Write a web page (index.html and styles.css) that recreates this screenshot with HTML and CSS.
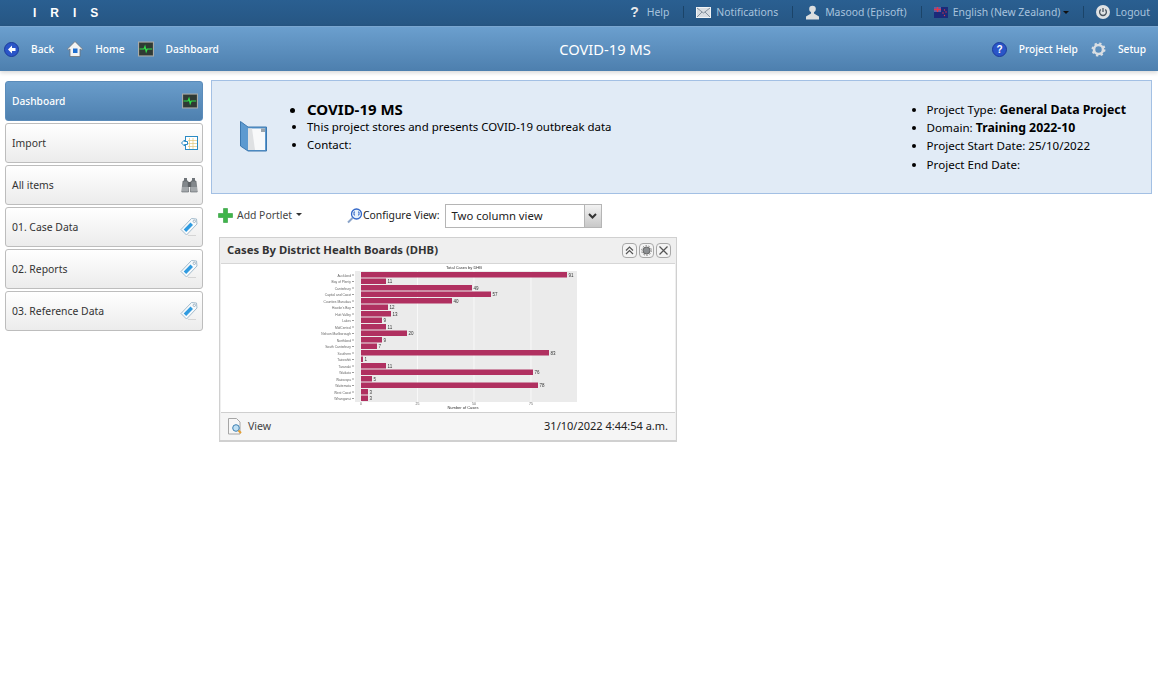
FILE: index.html
```html
<!DOCTYPE html>
<html lang="en">
<head>
    <meta charset="UTF-8">
    <meta name="viewport" content="width=device-width, initial-scale=1.0">
    <title>IRIS - COVID-19 MS</title>
    <link rel="stylesheet" href="styles.css">
</head>
<body>
    <svg class="defs" width="0" height="0" aria-hidden="true">
        <symbol id="icon-monitor" viewBox="0 0 16 16">
            <rect x="0.5" y="1" width="15" height="14" fill="#4a4f4b" stroke="#a9aba6"/>
            <rect x="1.500" y="2" width="13" height="12" fill="#2f3a34"/>
            <path d="M1.500 8h4.500l1-2.500 1.200 5 1-2.500h5" fill="none" stroke="#2fe04a" stroke-width="1.200"/>
        </symbol>
        <symbol id="icon-tag" viewBox="0 0 18 20">
            <path d="M11.500 1.500l5 .5.5 5-10.500 11-5.500-5.500z" fill="#f7fafc" stroke="#a4bccd"/>
            <path d="M10.500 5.500l2.500 2.500-6.800 7-2.500-2.500z" fill="#2f9be0"/>
            <circle cx="14.300" cy="4.300" r="1.200" fill="#fff" stroke="#7e98ac" stroke-width=".7"/>
            <path d="M8 18.500h8" stroke="#d5d5d5"/>
        </symbol>
    </svg>

    <header class="top-bar">
        <div class="brand">IRIS</div>
        <nav class="top-links">
            <a href="#help" class="top-link">
                <span class="glyph-help">?</span>
                Help
            </a>
            <a href="#notifications" class="top-link">
                <svg width="15" height="11" viewBox="0 0 15 11"><rect x=".5" y=".5" width="14" height="10" fill="#d8dde2" stroke="#f2f4f6"/><path d="M1 1l6.500 5L14 1M1 10l5-5M14 10L9 5" fill="none" stroke="#86929e"/></svg>
                Notifications
            </a>
            <a href="#user" class="top-link">
                <svg width="15" height="15" viewBox="0 0 15 15"><circle cx="7.500" cy="4" r="3.300" fill="#dcdedf"/><path d="M6 6.500h3v2l5 3v3H1v-3l5-3z" fill="#dcdedf"/></svg>
                Masood (Episoft)
            </a>
            <a href="#lang" class="top-link">
                <svg width="14" height="11" viewBox="0 0 14 11"><rect width="14" height="11" fill="#1b2a7a"/><rect width="7" height="5" fill="#5a5fa8"/><path d="M0 2.500h7M3.500 0v5" stroke="#e0364a" stroke-width="1.400"/><circle cx="10.500" cy="3" r=".7" fill="#e0364a"/><circle cx="12" cy="5" r=".7" fill="#e0364a"/><circle cx="9" cy="6" r=".7" fill="#e0364a"/><circle cx="10.500" cy="8.500" r=".7" fill="#e0364a"/></svg>
                English (New Zealand)
                <span class="caret caret-dark"></span>
            </a>
            <a href="#logout" class="top-link">
                <svg width="14" height="14" viewBox="0 0 14 14"><circle cx="7" cy="7" r="7" fill="#dfe2e4"/><path d="M4.700 4.600a3.400 3.400 0 1 0 4.600 0" fill="none" stroke="#4b5660" stroke-width="1.300"/><path d="M7 3v4" stroke="#4b5660" stroke-width="1.300"/></svg>
                Logout
            </a>
        </nav>
    </header>

    <div class="sub-bar">
        <div class="sub-links">
            <a href="#back" class="sub-link">
                <svg width="15" height="15" viewBox="0 0 15 15"><circle cx="7.500" cy="7.500" r="7" fill="#2a55c8" stroke="#1d3c9a"/><path d="M8 3.500L4 7.500l4 4V9h3.500V6H8z" fill="#fff"/></svg>
                Back
            </a>
            <a href="#home" class="sub-link">
                <svg width="16" height="16" viewBox="0 0 16 16"><path d="M8 .5L.5 8l1 1L3 8V15.500h10V8l1.500 1 1-1z" fill="#f3f4f4" stroke="#6f7276" stroke-width=".8"/><rect x="6" y="7.500" width="4.500" height="4.500" fill="#1f6fd0"/></svg>
                Home
            </a>
            <a href="#dashboard" class="sub-link">
                <svg width="16" height="16"><use href="#icon-monitor"/></svg>
                Dashboard
            </a>
        </div>
        <div class="sub-title">COVID-19 MS</div>
        <div class="sub-links sub-right">
            <a href="#project-help" class="sub-link">
                <svg width="15" height="15" viewBox="0 0 15 15"><circle cx="7.500" cy="7.500" r="7" fill="#2a55c8" stroke="#1d3c9a"/><text x="7.500" y="11" class="help-mark">?</text></svg>
                Project Help
            </a>
            <a href="#setup" class="sub-link">
                <svg width="15" height="15" viewBox="0 0 15 15"><circle cx="7.500" cy="7.500" r="4.500" fill="none" stroke="#d9dee3" stroke-width="2.600"/><circle cx="7.500" cy="7.500" r="6" fill="none" stroke="#d9dee3" stroke-width="2" stroke-dasharray="2.300 2.410"/></svg>
                Setup
            </a>
        </div>
    </div>

    <main class="content">
        <aside class="sidebar">
            <a href="#dashboard" class="side-item active">
                Dashboard
                <svg width="16" height="16"><use href="#icon-monitor"/></svg>
            </a>
            <a href="#import" class="side-item">
                Import
                <svg width="17" height="15" viewBox="0 0 17 15"><rect x="4.500" y=".5" width="12" height="13" fill="#fff" stroke="#2a8bc4"/><path d="M7 4.500h9M7 7.500h9M7 10.500h9M8.500 2v11M12 2v11" stroke="#e3c77a" stroke-width=".7"/><path d="M.5 7l3-3v1.500h3v3h-3V10z" fill="#fff" stroke="#2a8bc4"/></svg>
            </a>
            <a href="#all" class="side-item">
                All items
                <svg width="17" height="16" viewBox="0 0 17 16"><path d="M3 1h3v3H3zM11 1h3v3h-3z" fill="#70757a"/><path d="M2 4h5l.5 11H.8zM10 4h5l1.200 11H9.500z" fill="#83888c" stroke="#5d6165" stroke-width=".6"/><rect x="7" y="5" width="3" height="5" fill="#5d6165"/><rect x="1" y="10" width="6" height="4.500" fill="#a4a8ab"/><rect x="10" y="10" width="6" height="4.500" fill="#a4a8ab"/></svg>
            </a>
            <a href="#case-data" class="side-item">
                01. Case Data
                <svg width="18" height="20"><use href="#icon-tag"/></svg>
            </a>
            <a href="#reports" class="side-item">
                02. Reports
                <svg width="18" height="20"><use href="#icon-tag"/></svg>
            </a>
            <a href="#reference" class="side-item">
                03. Reference Data
                <svg width="18" height="20"><use href="#icon-tag"/></svg>
            </a>
        </aside>

        <section class="main-col">
            <div class="project-panel">
                <svg class="project-icon" width="27" height="32" viewBox="0 0 27 32">
                    <path d="M.5 .5L8 6h18.500v24H8L.5 25z" fill="#5d9ad0" stroke="#3c78b0"/>
                    <path d="M8 7.500h17V29H8z" fill="#f8f9fa"/>
                    <path d="M8 7.500h4l3 21.500H8z" fill="#dfe1e3"/>
                    <path d="M21 7.500h4V11h-4z" fill="#9aa4ad"/>
                </svg>
                <ul class="project-info">
                    <li class="project-name">COVID-19 MS</li>
                    <li>This project stores and presents COVID-19 outbreak data</li>
                    <li>Contact:</li>
                </ul>
                <ul class="project-meta">
                    <li>Project Type: <b>General Data Project</b></li>
                    <li>Domain: <b>Training 2022-10</b></li>
                    <li>Project Start Date: 25/10/2022</li>
                    <li>Project End Date:</li>
                </ul>
            </div>

            <div class="toolbar">
                <a href="#add" class="add-portlet">
                    <svg width="15" height="15" viewBox="0 0 15 15"><path d="M5.500 .5h4v5h5v4h-5v5h-4v-5h-5v-4h5z" fill="#3fb54a" stroke="#2f9a3c" stroke-width=".6"/></svg>
                    Add Portlet
                    <span class="caret"></span>
                </a>
                <div class="configure">
                    <svg width="16" height="16" viewBox="0 0 16 16"><circle cx="9.500" cy="6" r="5" fill="#e8f2fb" stroke="#3468c8" stroke-width="1.300"/><path d="M5.500 10L1 14.500" stroke="#8aa3c8" stroke-width="2"/><path d="M8 4H7v3h1M11 4h1v3h-1" fill="none" stroke="#3468c8"/></svg>
                    <label for="view-select">Configure View:</label>
                    <div class="select-box" id="view-select">
                        <span>Two column view</span>
                        <span class="select-btn"><svg width="9" height="6" viewBox="0 0 9 6"><path d="M1 1l3.500 3.500L8 1" fill="none" stroke="#333" stroke-width="2"/></svg></span>
                    </div>
                </div>
            </div>

            <div class="portlet">
                <div class="portlet-head">
                    <h2>Cases By District Health Boards (DHB)</h2>
                    <div class="portlet-tools">
                        <button class="tool-btn" type="button"><svg width="9" height="9" viewBox="0 0 9 9"><path d="M1 4.500l3.500-3.500L8 4.500M1 8l3.500-3.500L8 8" fill="none" stroke="#555" stroke-width="1.200"/></svg></button>
                        <button class="tool-btn" type="button"><svg width="11" height="11" viewBox="0 0 11 11"><circle cx="5.500" cy="5.500" r="3.500" fill="#8c8f92" stroke="#666"/><circle cx="5.500" cy="5.500" r="4.800" fill="none" stroke="#777" stroke-dasharray="1.500 1.500"/></svg></button>
                        <button class="tool-btn" type="button"><svg width="9" height="9" viewBox="0 0 9 9"><path d="M.5 .5l8 8M8.500 .5l-8 8" stroke="#555" stroke-width="1.200"/></svg></button>
                    </div>
                </div>
                <div class="portlet-body">
                    <svg class="chart" width="260" height="148" viewBox="0 0 260 148">
                        <text x="144" y="6" class="chart-title">Total Cases by DHB</text>
                        <rect x="35" y="8" width="222" height="131" class="plot"/>
                        <path class="grid" d="M41 8v131M97.500 8v131M154 8v131M211 8v131"/>
                        <path class="axis-ticks" d="M32 12h2M32 18.500h2M32 25h2M32 31.500h2M32 38h2M32 44.500h2M32 51h2M32 57.500h2M32 64h2M32 70.500h2M32 77h2M32 83.500h2M32 90h2M32 96.500h2M32 103h2M32 109.500h2M32 116h2M32 122.500h2M32 129h2M32 135.500h2"/>
                        <g class="chart-labels">
                            <text x="31" y="13.500">Auckland</text>
                            <text x="31" y="20">Bay of Plenty</text>
                            <text x="31" y="26.500">Canterbury</text>
                            <text x="31" y="33">Capital and Coast</text>
                            <text x="31" y="39.500">Counties Manukau</text>
                            <text x="31" y="46">Hawke's Bay</text>
                            <text x="31" y="52.500">Hutt Valley</text>
                            <text x="31" y="59">Lakes</text>
                            <text x="31" y="65.500">MidCentral</text>
                            <text x="31" y="72">Nelson Marlborough</text>
                            <text x="31" y="78.500">Northland</text>
                            <text x="31" y="85">South Canterbury</text>
                            <text x="31" y="91.500">Southern</text>
                            <text x="31" y="98">Tairawhiti</text>
                            <text x="31" y="104.500">Taranaki</text>
                            <text x="31" y="111">Waikato</text>
                            <text x="31" y="117.500">Wairarapa</text>
                            <text x="31" y="124">Waitemata</text>
                            <text x="31" y="130.500">West Coast</text>
                            <text x="31" y="137">Whanganui</text>
                        </g>
                        <g class="bars">
                            <rect x="41" y="9" width="206" height="5.500"/>
                            <rect x="41" y="15.500" width="25" height="5.500"/>
                            <rect x="41" y="22" width="111" height="5.500"/>
                            <rect x="41" y="28.500" width="130" height="5.500"/>
                            <rect x="41" y="35" width="91" height="5.500"/>
                            <rect x="41" y="41.500" width="27" height="5.500"/>
                            <rect x="41" y="48" width="30" height="5.500"/>
                            <rect x="41" y="54.500" width="21" height="5.500"/>
                            <rect x="41" y="61" width="25" height="5.500"/>
                            <rect x="41" y="67.500" width="46" height="5.500"/>
                            <rect x="41" y="74" width="21" height="5.500"/>
                            <rect x="41" y="80.500" width="16" height="5.500"/>
                            <rect x="41" y="87" width="188" height="5.500"/>
                            <rect x="41" y="93.500" width="2" height="5.500"/>
                            <rect x="41" y="100" width="25" height="5.500"/>
                            <rect x="41" y="106.500" width="172" height="5.500"/>
                            <rect x="41" y="113" width="11" height="5.500"/>
                            <rect x="41" y="119.500" width="177" height="5.500"/>
                            <rect x="41" y="126" width="7" height="5.500"/>
                            <rect x="41" y="132.500" width="7" height="5.500"/>
                        </g>
                        <g class="bar-values">
                            <text x="248.500" y="13.500">91</text>
                            <text x="67.500" y="20">11</text>
                            <text x="153.500" y="26.500">49</text>
                            <text x="172.500" y="33">57</text>
                            <text x="133.500" y="39.500">40</text>
                            <text x="69.500" y="46">12</text>
                            <text x="72.500" y="52.500">13</text>
                            <text x="63.500" y="59">9</text>
                            <text x="67.500" y="65.500">11</text>
                            <text x="88.500" y="72">20</text>
                            <text x="63.500" y="78.500">9</text>
                            <text x="58.500" y="85">7</text>
                            <text x="230.500" y="91.500">83</text>
                            <text x="44.500" y="98">1</text>
                            <text x="67.500" y="104.500">11</text>
                            <text x="214.500" y="111">76</text>
                            <text x="53.500" y="117.500">5</text>
                            <text x="219.500" y="124">78</text>
                            <text x="49.500" y="130.500">3</text>
                            <text x="49.500" y="137">3</text>
                        </g>
                        <g class="chart-ticks">
                            <text x="41" y="142">0</text>
                            <text x="97.500" y="142">25</text>
                            <text x="154" y="142">50</text>
                            <text x="211" y="142">75</text>
                        </g>
                        <text x="143" y="146" class="chart-title">Number of Cases</text>
                    </svg>
                </div>
                <div class="portlet-foot">
                    <a href="#view" class="view-link">
                        <svg width="17" height="17" viewBox="0 0 17 17"><path d="M1.500 .5h8l3.500 3.500v12H1.500z" fill="#f7f7f7" stroke="#a6a6a6"/><circle cx="9" cy="10" r="3.300" fill="#bfe0f4" stroke="#3d7fb0"/><path d="M11.500 12.500l2.500 2.500" stroke="#e8a030" stroke-width="2"/></svg>
                        View
                    </a>
                    <span class="portlet-date">31/10/2022 4:44:54 a.m.</span>
                </div>
            </div>
        </section>
    </main>
</body>
</html>
```

FILE: styles.css
```css
/* Reset and Base Styles */
* {
    margin: 0;
    padding: 0;
    box-sizing: border-box;
}

body {
    background: #ffffff;
    color: #000000;
    font-family: "Noto Sans", sans-serif;
    font-size: 10.400px;
    min-height: 100vh;
}

a {
    color: inherit;
    text-decoration: none;
}

svg {
    flex: none;
}

.defs {
    position: absolute;
}

.caret {
    display: inline-block;
    width: 0;
    height: 0;
    border-left: 3px solid transparent;
    border-right: 3px solid transparent;
    border-top: 3px solid #333333;
}

.caret-dark {
    border-top-color: #111111;
    margin-left: -2px;
}

/* Top Bar */
.top-bar {
    height: 26px;
    background: linear-gradient(#2a5f91, #265683);
    display: flex;
    justify-content: space-between;
    align-items: center;
    padding: 0 8px 2px 33px;
}

.brand {
    color: #ffffff;
    font-family: "Liberation Sans", sans-serif;
    font-size: 12px;
    font-weight: bold;
    letter-spacing: 14px;
    padding-top: 2px;
}

.top-links {
    display: flex;
    align-items: center;
}

.top-link {
    display: flex;
    align-items: center;
    gap: 5px;
    color: #a9c4de;
    padding: 0 14px 0 12px;
    border-right: 1px solid #1b4469;
    height: 12px;
}

.top-link:last-child {
    border-right: none;
    padding-right: 0;
}

.glyph-help {
    color: #e6e8ea;
    font-family: "Liberation Sans", sans-serif;
    font-size: 14px;
    font-weight: bold;
    margin-right: 3px;
}

/* Sub Bar */
.sub-bar {
    height: 45px;
    background: linear-gradient(#6b9fce, #4d7fae);
    border-top: 1px solid #7aa6d0;
    box-shadow: 0 2px 4px rgba(0,0,0,0.15);
    display: grid;
    grid-template-columns: 1fr auto 1fr;
    align-items: center;
    padding: 0 12px 0 4px;
}

.sub-links {
    display: flex;
    align-items: center;
    gap: 13px;
}

.sub-right {
    justify-content: flex-end;
    gap: 13px;
}

.sub-link {
    display: flex;
    align-items: center;
    gap: 12px;
    color: #ffffff;
    font-weight: 500;
    font-size: 10.200px;
}

.sub-title {
    color: #ffffff;
    font-size: 14.700px;
    margin-left: 60px;
}

.help-mark {
    fill: #ffffff;
    font: bold 10px "Liberation Sans", sans-serif;
    text-anchor: middle;
}

/* Page Layout */
.content {
    display: flex;
    gap: 8px;
    padding: 9px 6px 0 5px;
}

.sidebar {
    width: 198px;
    flex: none;
    display: flex;
    flex-direction: column;
    gap: 2px;
    padding-top: 1px;
}

.side-item {
    height: 40px;
    display: flex;
    justify-content: space-between;
    align-items: center;
    padding: 0 4px 1px 6px;
    color: #333333;
    background: linear-gradient(#ffffff, #ececec);
    border: 1px solid #bdbdbd;
    border-radius: 3px;
}

.side-item svg {
    margin-top: 1px;
}

.side-item.active {
    color: #ffffff;
    background: linear-gradient(#6a9dcb, #4e80af);
    border-color: #5b8cba;
    font-weight: 500;
    font-size: 10.200px;
}

.main-col {
    flex: 1;
}

/* Project Panel */
.project-panel {
    height: 114px;
    background: #e1ebf6;
    border: 1px solid #a3c0e4;
    display: flex;
    align-items: flex-start;
    font-size: 11.600px;
    line-height: 18.200px;
}

.project-panel b {
    font-size: 12.300px;
}

.project-icon {
    margin: 40px 0 0 28px;
}

.project-info {
    margin: 19.400px 0 0 40px;
    flex: 1;
    line-height: 18px;
}

.project-info li {
    font-size: 11.450px;
}

.project-info .project-name {
    font-size: 15px;
    font-weight: bold;
}

.project-meta {
    margin: 20px 25px 0 0;
}

/* Toolbar */
.toolbar {
    height: 43px;
    display: flex;
    align-items: center;
    padding-left: 7px;
}

.add-portlet {
    display: flex;
    align-items: center;
    gap: 4px;
    color: #444444;
    width: 129px;
    padding-bottom: 2px;
}

.add-portlet svg {
    margin-top: 2px;
}

.configure {
    display: flex;
    align-items: center;
    color: #222222;
}

.configure label {
    padding-bottom: 1px;
}

.select-box {
    width: 157px;
    height: 24px;
    margin-left: 5px;
    display: flex;
    justify-content: space-between;
    align-items: center;
    border: 1px solid #b5b5b5;
    padding-left: 6px;
    font-size: 11.300px;
    background: #ffffff;
}

.select-btn {
    width: 17px;
    height: 100%;
    display: flex;
    align-items: center;
    justify-content: center;
    background: linear-gradient(#f2f2f2, #c8c8c8);
    border-left: 1px solid #b5b5b5;
}

/* Portlet */
.portlet {
    width: 458px;
    margin-left: 8px;
    background: #efefef;
    border: 1px solid #d0d0d0;
    border-bottom-width: 2px;
}

.portlet-head {
    height: 25px;
    display: flex;
    justify-content: space-between;
    align-items: center;
    padding: 0 5px 2px 7px;
}

.portlet-head h2 {
    font-size: 11.300px;
    font-weight: bold;
    color: #333333;
}

.portlet-tools {
    display: flex;
    gap: 2px;
    margin-top: 2px;
}

.tool-btn {
    width: 15px;
    height: 15px;
    display: flex;
    align-items: center;
    justify-content: center;
    border: 1px solid #a8a8a8;
    border-radius: 4px;
    background: #f4f4f4;
}

.portlet-body {
    background: #ffffff;
    margin: 0 1px;
    height: 149px;
    border-top: 1px solid #d6d6d6;
    display: flex;
    justify-content: center;
}

/* Chart is a scaled-down plot in the original, hence the slight blur */
.chart {
    margin: -1px 0 0 3px;
    filter: blur(0.3px);
}

.plot {
    fill: #ebebeb;
}

.grid {
    stroke: #f8f8f8;
    stroke-width: 1;
    fill: none;
}

.axis-ticks {
    stroke: #555555;
    stroke-width: 0.600;
}

.bars rect {
    fill: #b03060;
}

.bar-values text,
.chart-ticks text,
.chart-labels text {
    font: 4.500px "Liberation Sans", sans-serif;
    fill: #333333;
}

.chart-labels text {
    font-size: 3.300px;
    text-anchor: end;
    fill: #666666;
}

.chart-ticks text {
    font-size: 3.500px;
    text-anchor: middle;
    fill: #666666;
}

.chart-title {
    font: 4px "Liberation Sans", sans-serif;
    fill: #333333;
    text-anchor: middle;
}

.portlet-foot {
    height: 28px;
    margin: 0 1px;
    display: flex;
    justify-content: space-between;
    align-items: center;
    padding: 0 7px 2px 6px;
    background: #f5f5f5;
    border-top: 1px solid #cfcfcf;
    font-size: 11px;
}

.view-link {
    display: flex;
    align-items: center;
    gap: 4px;
    color: #444444;
    font-size: 10.600px;
}

.view-link svg {
    margin-top: 2px;
}

.portlet-date {
    color: #222222;
}
```
